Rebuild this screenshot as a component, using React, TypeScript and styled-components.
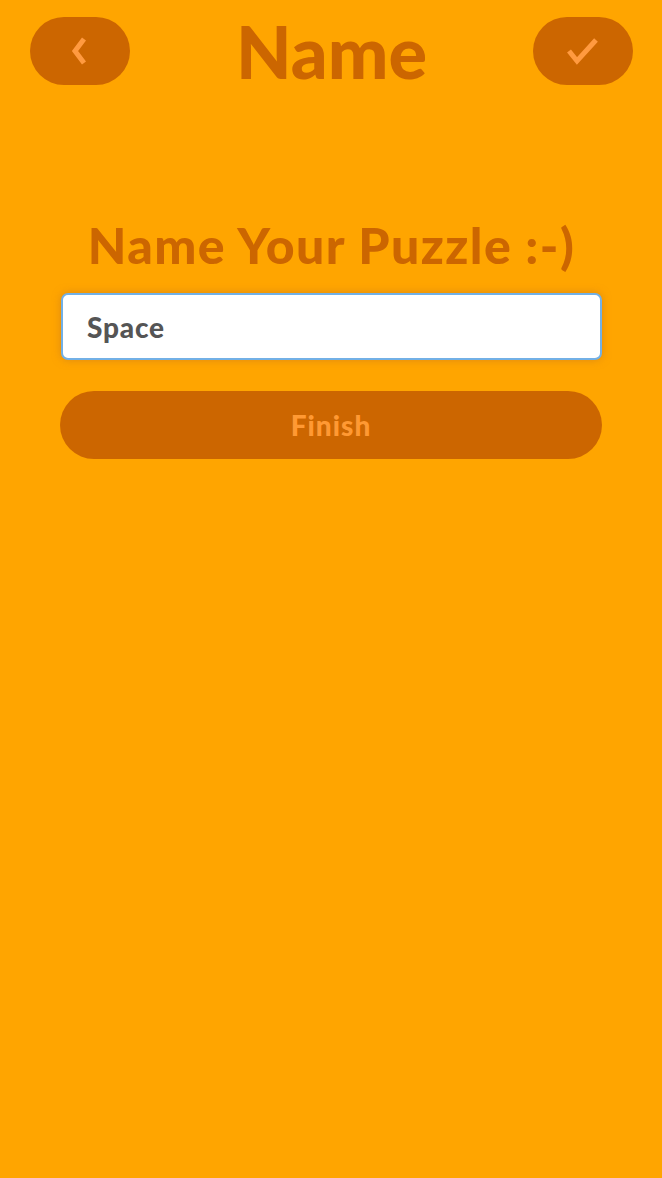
import React from "react";
import styled, { createGlobalStyle } from "styled-components";

const Global = createGlobalStyle`
  html, body { margin: 0; padding: 0; background: #ffa500; }
  body { font-family: "Lato", "Noto Sans", sans-serif; }
`;

const Page = styled.div`
  width: 662px;
  min-height: 1178px;
  background: #ffa500;
  display: flex;
  flex-direction: column;
`;

const Header = styled.header`
  display: flex;
  align-items: center;
  justify-content: space-between;
  padding: 17px 29px 0 30px;
  height: 68px;
`;

const IconButton = styled.button`
  width: 100px;
  height: 68px;
  border-radius: 34px;
  border: none;
  background: #cc6600;
  display: flex;
  align-items: center;
  justify-content: center;
  padding: 0;
  cursor: pointer;
`;

const Title = styled.h1`
  margin: 0;
  font-family: "Lato", sans-serif;
  font-weight: 900;
  font-size: 72px;
  line-height: 64px;
  color: #cc6600;
  letter-spacing: 0px;
`;

const Main = styled.main`
  display: flex;
  flex-direction: column;
  align-items: stretch;
  padding: 132px 60px 0 61px;
`;

const Heading = styled.h2`
  margin: 0;
  text-align: center;
  font-family: "Lato", sans-serif;
  font-weight: 900;
  font-size: 50px;
  line-height: 56px;
  color: #cc6600;
  letter-spacing: 1.4px;
`;

const Input = styled.input`
  margin-top: 20px;
  height: 67px;
  box-sizing: border-box;
  border: 2px solid #72b0e6;
  border-radius: 7px;
  background: #fff;
  padding: 0 24px;
  font-family: "Lato", sans-serif;
  font-weight: 900;
  font-size: 28px;
  letter-spacing: 0.8px;
  color: #555555;
  outline: none;
  box-shadow: 0 0 8px rgba(200, 120, 30, 0.6);
  caret-color: #555;
`;

const FinishButton = styled.button`
  margin-top: 31px;
  margin-left: -1px;
  height: 68px;
  border-radius: 34px;
  border: none;
  background: #cc6600;
  color: #ff9933;
  font-family: "Lato", sans-serif;
  font-weight: 900;
  font-size: 28px;
  letter-spacing: 1px;
  cursor: pointer;
`;

export default function App() {
  return (
    <Page>
      <Global />
      <Header>
        <IconButton aria-label="Back">
          <svg width="22" height="30" viewBox="0 0 22 30">
            <path d="M15 3 L6 15 L15 27" fill="none" stroke="#ff9a40" strokeWidth="5" />
          </svg>
        </IconButton>
        <Title>Name</Title>
        <IconButton aria-label="Done">
          <svg width="34" height="30" viewBox="0 0 34 30">
            <path d="M3 15 L11 25 L30 4" fill="none" stroke="#ff9a40" strokeWidth="5" />
          </svg>
        </IconButton>
      </Header>
      <Main>
        <Heading>Name Your Puzzle :-)</Heading>
        <Input defaultValue="Space" autoFocus />
        <FinishButton>Finish</FinishButton>
      </Main>
    </Page>
  );
}
